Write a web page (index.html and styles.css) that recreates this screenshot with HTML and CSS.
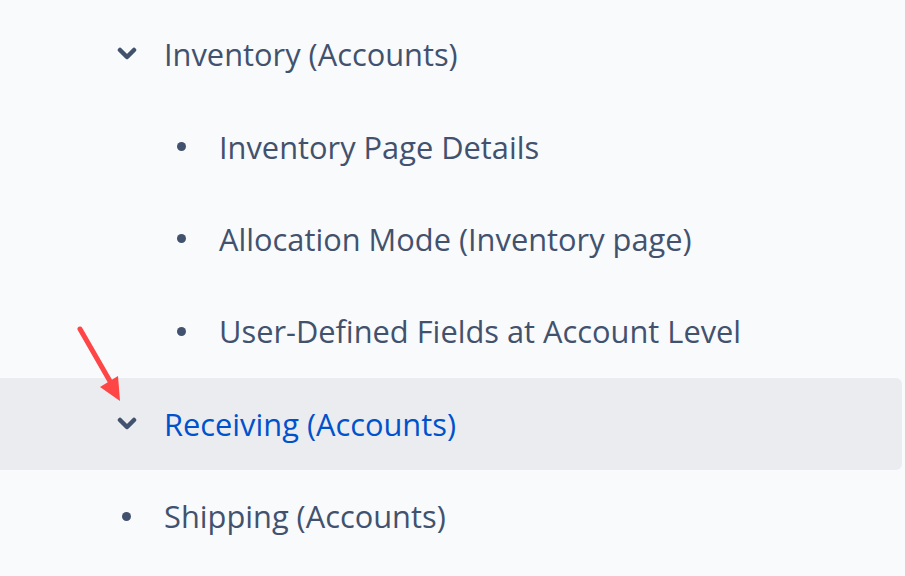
FILE: index.html
```html
<!DOCTYPE html>
<html lang="en">
<head>
  <meta charset="UTF-8">
  <meta name="viewport" content="width=device-width, initial-scale=1.0">
  <title>Page tree</title>
  <link rel="stylesheet" href="styles.css">
</head>
<body>
  <ul class="tree">
    <li class="row level-1">
      <span class="marker">
        <svg class="chevron" width="20" height="14" viewBox="0 0 20 14"><path d="M3 3 L10 10 L17 3" /></svg>
      </span>
      <span class="label">Inventory (Accounts)</span>
    </li>
    <li class="row level-2">
      <span class="marker"><span class="dot"></span></span>
      <span class="label">Inventory Page Details</span>
    </li>
    <li class="row level-2">
      <span class="marker"><span class="dot"></span></span>
      <span class="label">Allocation Mode (Inventory page)</span>
    </li>
    <li class="row level-2">
      <span class="marker"><span class="dot"></span></span>
      <span class="label">User-Defined Fields at Account Level</span>
    </li>
    <li class="row level-1 active">
      <span class="marker">
        <svg class="chevron" width="20" height="14" viewBox="0 0 20 14"><path d="M3 3 L10 10 L17 3" /></svg>
      </span>
      <span class="label">Receiving (Accounts)</span>
      <svg class="pointer" width="60" height="90" viewBox="0 0 60 90">
        <path class="shaft" d="M9 9 L40 63" />
        <path class="head" d="M29 67 L47 56 L49 81 Z" />
      </svg>
    </li>
    <li class="row level-1">
      <span class="marker"><span class="dot"></span></span>
      <span class="label">Shipping (Accounts)</span>
    </li>
  </ul>
</body>
</html>
```
FILE: styles.css
```css
body {
  margin: 0;
  background: #f9fafc;
  font-family: "Open Sans", "Noto Sans", sans-serif;
  color: #42526e;
}

.tree {
  list-style: none;
  margin: 0;
  padding: 8px 3px 0 0;
}

.row {
  position: relative;
  display: flex;
  align-items: center;
  height: 92.4px;
  font-size: 30.8px;
}

.level-1 {
  padding-left: 111px;
}

.level-2 {
  padding-left: 166px;
}

.marker {
  width: 53px;
  display: flex;
  align-items: center;
}

.chevron {
  margin-left: 6px;
}

.chevron path {
  fill: none;
  stroke: #42526e;
  stroke-width: 4.5;
  stroke-linecap: round;
  stroke-linejoin: round;
}

.dot {
  display: block;
  width: 9px;
  height: 9px;
  margin-left: 11px;
  border-radius: 50%;
  background: #42526e;
}

.active {
  background: #ebecf0;
  border-radius: 0 6px 6px 0;
}

.active .label {
  color: #0052cc;
}

.pointer {
  position: absolute;
  left: 71px;
  top: -58px;
}

.pointer .shaft {
  stroke: #ff4646;
  stroke-width: 5;
  stroke-linecap: round;
}

.pointer .head {
  fill: #ff4646;
}
```
